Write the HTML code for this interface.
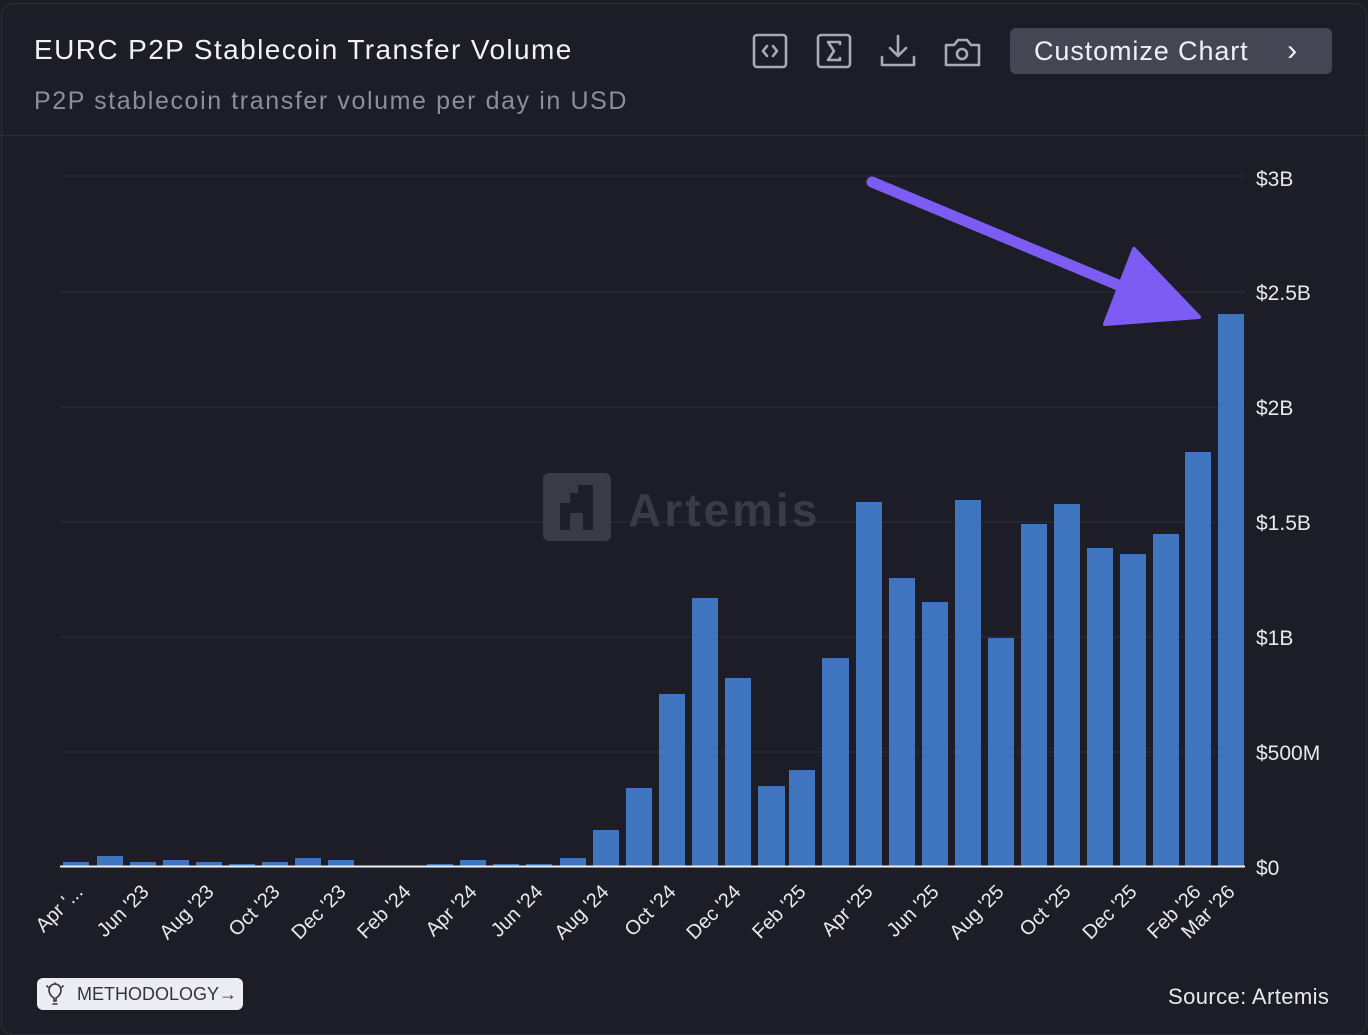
<!DOCTYPE html>
<html><head><meta charset="utf-8"><style>
html,body{margin:0;padding:0;background:#1b1c24;width:1368px;height:1028px;overflow:hidden;font-family:"Liberation Sans",sans-serif;}
.card{position:absolute;left:1px;top:3px;width:1364px;height:1030px;border:1px solid #2c2d38;border-radius:12px;background:#1c1d26;}
.title{position:absolute;left:34px;top:34px;color:#f2f2f5;font-size:28px;letter-spacing:1.4px;}
.sub{position:absolute;left:34px;top:87px;color:#8d8e99;font-size:25px;letter-spacing:1.6px;}
.hr{position:absolute;left:0;top:135px;width:1368px;height:1px;background:#2c2d38;}
.btn{position:absolute;left:1010px;top:28px;width:322px;height:46px;background:#454654;border-radius:6px;color:#f0f0f4;font-size:27px;letter-spacing:0.9px;box-sizing:border-box;padding:8px 0 0 24px;}
.btn span{position:absolute;right:34px;top:6px;font-size:30px;}
.meth{position:absolute;left:37px;top:978px;width:206px;height:32px;background:#ececf4;border-radius:6px;color:#33343f;font-size:18px;box-sizing:border-box;padding:6px 0 0 40px;}
.src{position:absolute;left:1168px;top:984px;color:#e8e8ee;font-size:22px;letter-spacing:0.4px;}
</style></head><body>
<div class="card"></div>
<div class="title">EURC P2P Stablecoin Transfer Volume</div>
<div class="sub">P2P stablecoin transfer volume per day in USD</div>
<div class="hr"></div>
<div class="btn">Customize Chart<span>›</span></div>
<div class="meth">METHODOLOGY→</div>
<div class="src">Source: Artemis</div>
<svg style="position:absolute;left:0;top:0" width="1368" height="1028">
 <g fill="none" stroke="#a9aab5" stroke-width="2.6" stroke-linecap="round" stroke-linejoin="round">
  <rect x="754" y="35" width="32" height="32" rx="3"/>
  <path d="M767 46 l-4 5 l4 5 M773 46 l4 5 l-4 5"/>
  <rect x="818" y="35" width="32" height="32" rx="3"/>
  <path d="M840 44 v-2 h-12 l6 9 l-6 9 h12 v-2"/>
  <path d="M898 36 v19 M890 48 l8 8 l8 -8 M882 57 v8 h32 v-8"/>
  <path d="M946 45 h8 l4 -5 h9 l4 5 h8 v20 h-33 z"/>
  <circle cx="962" cy="54" r="5"/>
 </g>
 <g stroke="#2e2f3a" stroke-width="1">
  <line x1="60" y1="176" x2="1245" y2="176"/><line x1="60" y1="292" x2="1245" y2="292"/>
  <line x1="60" y1="407" x2="1245" y2="407"/><line x1="60" y1="522" x2="1245" y2="522"/>
  <line x1="60" y1="637" x2="1245" y2="637"/><line x1="60" y1="752" x2="1245" y2="752"/>
 </g>
 <rect x="543" y="473" width="68" height="68" rx="6" fill="#3a3b45"/>
 <path d="M578 485 h15 v45 h-10 v-17 h-13 v17 h-10 v-27 h10 v-10 h8 z" fill="#1e1f28"/>
 <text x="628" y="526" font-size="46" font-weight="bold" fill="#3a3b45" letter-spacing="3">Artemis</text>
 <g fill="#3f74be">
  <rect x="63" y="862" width="26" height="4"/><rect x="97" y="856" width="26" height="10"/>
  <rect x="130" y="862" width="26" height="4"/><rect x="163" y="860" width="26" height="6"/>
  <rect x="196" y="862" width="26" height="4"/><rect x="229" y="864" width="26" height="2"/>
  <rect x="262" y="862" width="26" height="4"/><rect x="295" y="858" width="26" height="8"/>
  <rect x="328" y="860" width="26" height="6"/>
  <rect x="427" y="864" width="26" height="2"/><rect x="460" y="860" width="26" height="6"/>
  <rect x="493" y="864" width="26" height="2"/><rect x="526" y="864" width="26" height="2"/>
  <rect x="560" y="858" width="26" height="8"/><rect x="593" y="830" width="26" height="36"/>
  <rect x="626" y="788" width="26" height="78"/><rect x="659" y="694" width="26" height="172"/>
  <rect x="692" y="598" width="26" height="268"/><rect x="725" y="678" width="26" height="188"/>
  <rect x="758" y="786" width="27" height="80"/><rect x="789" y="770" width="26" height="96"/>
  <rect x="822" y="658" width="27" height="208"/><rect x="856" y="502" width="26" height="364"/>
  <rect x="889" y="578" width="26" height="288"/><rect x="922" y="602" width="26" height="264"/>
  <rect x="955" y="500" width="26" height="366"/><rect x="988" y="638" width="26" height="228"/>
  <rect x="1021" y="524" width="26" height="342"/><rect x="1054" y="504" width="26" height="362"/>
  <rect x="1087" y="548" width="26" height="318"/><rect x="1120" y="554" width="26" height="312"/>
  <rect x="1153" y="534" width="26" height="332"/><rect x="1185" y="452" width="26" height="414"/>
  <rect x="1218" y="314" width="26" height="552"/>
 </g>
 <line x1="60" y1="866.5" x2="1245" y2="866.5" stroke="#f0f0f4" stroke-width="2"/>
 <g fill="#e8e8ee" font-size="21">
  <text x="1256" y="186">$3B</text><text x="1256" y="300">$2.5B</text><text x="1256" y="415">$2B</text>
  <text x="1256" y="530">$1.5B</text><text x="1256" y="645">$1B</text><text x="1256" y="760">$500M</text>
  <text x="1256" y="875">$0</text>
 </g>
 <g fill="#e8e8ee" font-size="20" text-anchor="end">
  <text transform="translate(84,893) rotate(-45)">Apr '...</text>
  <text transform="translate(150,893) rotate(-45)">Jun '23</text>
  <text transform="translate(215,893) rotate(-45)">Aug '23</text>
  <text transform="translate(281,893) rotate(-45)">Oct '23</text>
  <text transform="translate(347,893) rotate(-45)">Dec '23</text>
  <text transform="translate(412,893) rotate(-45)">Feb '24</text>
  <text transform="translate(478,893) rotate(-45)">Apr '24</text>
  <text transform="translate(544,893) rotate(-45)">Jun '24</text>
  <text transform="translate(610,893) rotate(-45)">Aug '24</text>
  <text transform="translate(677,893) rotate(-45)">Oct '24</text>
  <text transform="translate(742,893) rotate(-45)">Dec '24</text>
  <text transform="translate(807,893) rotate(-45)">Feb '25</text>
  <text transform="translate(874,893) rotate(-45)">Apr '25</text>
  <text transform="translate(940,893) rotate(-45)">Jun '25</text>
  <text transform="translate(1005,893) rotate(-45)">Aug '25</text>
  <text transform="translate(1072,893) rotate(-45)">Oct '25</text>
  <text transform="translate(1138,893) rotate(-45)">Dec '25</text>
  <text transform="translate(1202,893) rotate(-45)">Feb '26</text>
  <text transform="translate(1236,893) rotate(-45)">Mar '26</text>
 </g>
 <line x1="872" y1="182" x2="1130" y2="290" stroke="#7c5cf2" stroke-width="11" stroke-linecap="round"/>
 <path d="M1105 324 L1199 317 L1134 249 Z" fill="#7c5cf2" stroke="#7c5cf2" stroke-width="4" stroke-linejoin="round"/>
 <g fill="none" stroke="#33343f" stroke-width="1.6" stroke-linecap="round">
  <path d="M54 1001 v-3 q-5 -3 -5 -8 a6 6 0 0 1 12 0 q0 5 -5 8 v3 z M53 1004 h4"/>
  <path d="M47 986 l1 1 M63 986 l-1 1 M55 983 v1"/>
 </g>
</svg>
</body></html>
